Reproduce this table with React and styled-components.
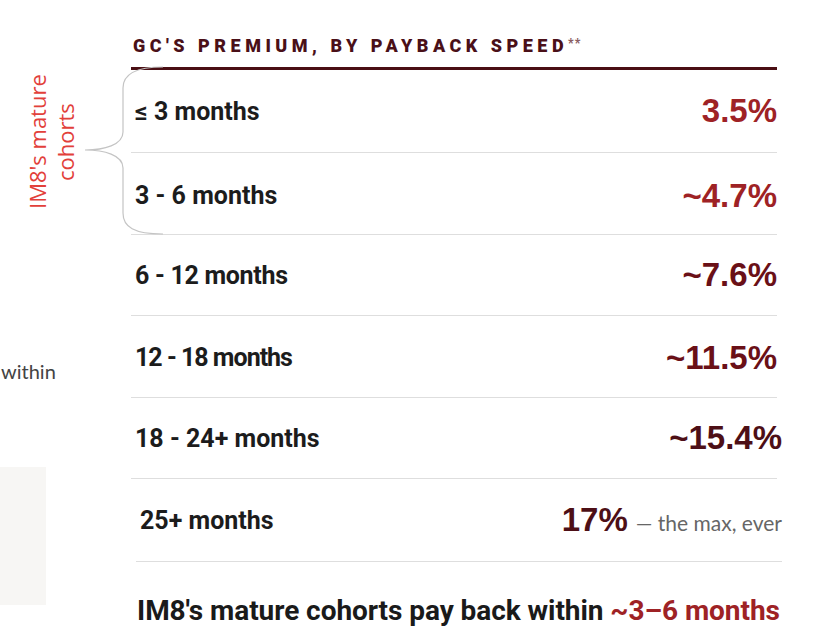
import styled, { createGlobalStyle } from 'styled-components';

const GlobalStyle = createGlobalStyle`
	body {
		margin: 0;
		background: #ffffff;
		font-family: Roboto, 'Liberation Sans', sans-serif;
	}
`;

const Page = styled.div`
	display: flex;
	width: 824px;
	height: 636px;
	overflow: hidden;
	background: #ffffff;
`;

const Rail = styled.aside`
	width: 131px;
	flex-shrink: 0;
	display: flex;
	flex-direction: column;
`;

const Cohort = styled.div`
	position: relative;
	margin-top: 67px;
	height: 167px;
	padding: 8px 0 0 23px;
	box-sizing: border-box;
`;

const CohortLabel = styled.div`
	writing-mode: vertical-rl;
	transform: rotate(180deg);
	height: 134px;
	white-space: nowrap;
	text-align: center;
	font-family: 'Open Sans', sans-serif;
	font-size: 22px;
	line-height: 28px;
	color: #e2403a;
`;

const Brace = styled.svg`
	position: absolute;
	left: 84px;
	top: 0;
	overflow: visible;
`;

const Within = styled.p`
	margin: 125px 0 0 1px;
	font-family: Lato, sans-serif;
	font-size: 20px;
	line-height: 24px;
	color: #444444;
`;

const GreyBox = styled.div`
	margin-top: 84px;
	width: 46px;
	height: 138px;
	background: #f7f6f4;
`;

const Main = styled.main`
	width: 646px;
	flex-shrink: 0;
`;

const Header = styled.div`
	padding: 34px 0 12px 2px;
	border-bottom: 3px solid #4a0f14;
`;

const Title = styled.h2`
	margin: 0;
	font-family: Roboto, sans-serif;
	font-weight: 900;
	font-size: 18px;
	line-height: 18px;
	letter-spacing: 4.5px;
	color: #4a1018;
	sup {
		font-size: 12px;
		letter-spacing: 1px;
		color: #8b5e62;
		vertical-align: 5px;
	}
`;

const Row = styled.div`
	display: flex;
	align-items: center;
	justify-content: space-between;
	height: ${props => props.$h}px;
	box-sizing: border-box;
	padding: ${props => props.$dy}px 0 0 ${props => props.$indent}px;
	margin: 0 ${props => -props.$shift}px 0 ${props => props.$shift}px;
	border-bottom: 1px solid #dedede;
`;

const Label = styled.span`
	font-family: Roboto, sans-serif;
	font-weight: 700;
	font-size: 25px;
	letter-spacing: ${props => props.$track}px;
	color: #1c1c1c;
`;

const Value = styled.span`
	display: flex;
	align-items: baseline;
	margin-right: ${props => props.$push}px;
	font-family: 'Liberation Sans', Arial, sans-serif;
	font-weight: 700;
	font-size: 33px;
	color: ${props => props.$color};
`;

const Note = styled.span`
	margin-left: 8px;
	font-family: Lato, sans-serif;
	font-weight: 400;
	font-size: 21px;
	color: #666666;
`;

const Statement = styled.p`
	margin: 32px 0 0 6px;
	white-space: nowrap;
	font-family: Roboto, sans-serif;
	font-weight: 700;
	font-size: 28px;
	line-height: 34px;
	letter-spacing: -0.06px;
	color: #1a1a1a;
	em {
		font-style: normal;
		color: #9e2225;
	}
`;

const rows = [
	{ label: '≤ 3 months', value: '3.5%', color: '#9e2225', h: 83, dy: 0 },
	{ label: '3 - 6 months', value: '~4.7%', color: '#9e2225', h: 82, dy: 4 },
	{ label: '6 - 12 months', value: '~7.6%', color: '#6a1017', h: 81, dy: 0, track: -0.3 },
	{ label: '12 - 18 months', value: '~11.5%', color: '#6a1017', h: 82, dy: 2, track: -1 },
	{ label: '18 - 24+ months', value: '~15.4%', color: '#4d0f16', h: 81, dy: 0, push: -5 },
	{ label: '25+ months', value: '17%', color: '#4d0f16', h: 83, dy: 0, shift: 5, indent: 4, note: '— the max, ever' },
];

const App = () => {
	return (
		<>
			<GlobalStyle />
			<Page>
				<Rail>
					<Cohort>
						<CohortLabel>
							IM8's mature
							<br />
							cohorts
						</CohortLabel>
						<Brace width="82" height="168" viewBox="0 0 82 168">
							<path
								d="M79 0 C50 0 39 8 39 21 L39 65 C39 78 20 83 1 83 C20 83 39 88 39 101 L39 146 C39 160 50 167 79 167"
								fill="none"
								stroke="#c4c4c4"
								strokeWidth="1.2"
							/>
						</Brace>
					</Cohort>
					<Within>within</Within>
					<GreyBox />
				</Rail>
				<Main>
					<Header>
						<Title>
							GC'S PREMIUM, BY PAYBACK SPEED<sup>**</sup>
						</Title>
					</Header>
					{rows.map(row => (
						<Row
							key={row.label}
							$h={row.h}
							$dy={row.dy}
							$indent={row.indent ?? 4}
							$shift={row.shift ?? 0}
						>
							<Label $track={row.track ?? 0}>{row.label}</Label>
							<Value $color={row.color} $push={row.push ?? 0}>
								{row.value}
								{row.note && <Note>{row.note}</Note>}
							</Value>
						</Row>
					))}
					<Statement>
						IM8's mature cohorts pay back within <em>~3–6 months</em>
					</Statement>
				</Main>
			</Page>
		</>
	);
};

export default App;
